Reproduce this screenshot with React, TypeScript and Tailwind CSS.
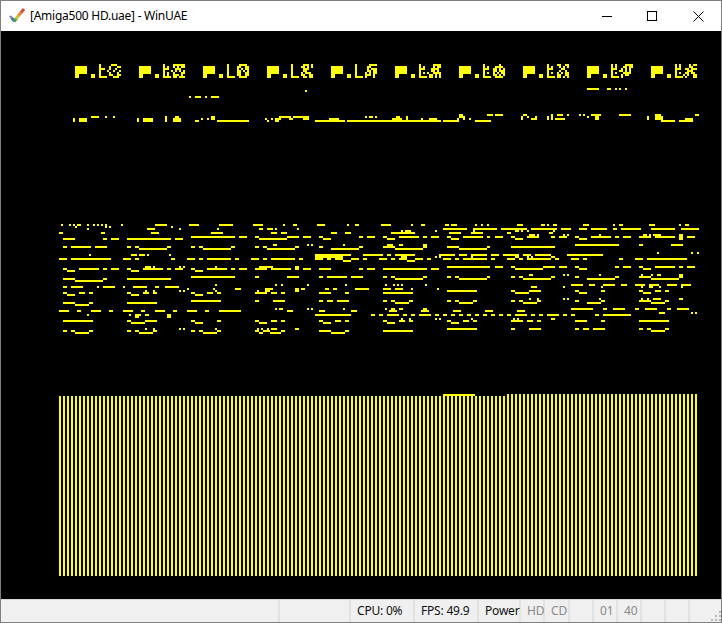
/**
 * WinUAE window with a garbled yellow Amiga display
 */

// Display rows measured from 3x crops: [y, x1, x2, x1, x2, ...], each row is 6 crop px tall
type Row = number[];

const LEFT: Row[] = [
  [27, 33, 39, 57, 63, 69, 75, 81, 93, 111, 117, 129, 135, 141, 147, 153, 159, 165, 171, 213, 219, 315, 351, 417, 447, 507, 549, 609, 639],
  [33, 75, 81, 165, 171, 177, 183, 363, 369],
  [39, 111, 117, 291, 315, 387, 393, 501, 507, 627, 639, 651, 660],
  [51, 27, 39, 153, 165, 303, 327, 483, 519],
  [63, 423, 555, 567, 591, 615, 627],
  [69, 39, 75, 159, 171, 183, 207, 231, 363, 375, 399, 627, 660],
  [93, 39, 51, 63, 123, 135, 171, 231, 243, 255, 267, 351, 363, 423, 435, 447, 459, 543, 555, 615, 627, 639, 651],
  [99, 267, 351, 459, 543, 651, 660],
  [117, 117, 123, 243, 261, 267, 285, 291, 297, 357, 363],
  [129, 27, 51, 63, 183, 219, 243, 255, 267, 363, 375, 411, 435, 447, 459, 471, 543, 555, 567, 603, 627, 639, 651],
  [153, 285, 303, 309, 315, 387, 393, 399, 405, 495, 501, 627, 660],
  [159, 39, 51, 87, 147, 159, 171, 183, 207, 231, 243, 279, 339, 351, 363, 375, 399, 423, 435, 471, 531, 543, 555, 567, 591, 615, 651],
  [165, 51, 75, 243, 267, 435, 459],
  [183, 423, 555, 615, 627],
  [189, 39, 75, 159, 171, 231, 363],
  [195, 75, 159],
  [207, 495, 501],
  [213, 39, 51, 63, 99, 141, 147, 159, 195, 219, 225, 249, 291, 315, 327, 345, 387],
  [219, 411, 417, 489, 495, 555, 573, 645, 660],
  [225, 285, 291, 309, 315, 387, 393, 399, 405, 495, 501, 621, 627, 645, 660],
  [231, 39, 51, 87, 105, 117, 129, 231, 243, 279, 297, 309, 321, 423, 435, 471, 489, 501, 513, 615, 651],
  [237, 51, 75, 243, 267, 435, 459],
  [255, 423, 513, 615, 627],
  [261, 39, 75, 117, 129, 231, 321],
  [267, 75, 117],
  [285, 27, 57, 81, 93, 123, 153, 177, 189, 219, 249, 273, 285, 315, 345, 369, 381, 411, 441, 465, 477, 507, 573],
  [297, 111, 117, 237, 243, 255, 273, 285, 297, 351, 363],
  [303, 255, 267, 351, 363],
  [315, 39, 129, 231, 243, 285, 321, 423, 435, 501, 513, 615, 627],
  [321, 243, 285, 435, 459, 627, 651],
  [339, 285, 291, 309, 315, 387, 393, 399, 405, 495, 501, 621, 627, 633, 639, 651, 657],
  [345, 39, 51, 63, 75, 117, 129, 231, 243, 255, 267, 309, 321, 423, 435, 447, 459, 501, 513, 615, 627, 639, 660],
  [351, 75, 117, 267, 309, 459, 501, 627, 639],
];

const MIDDLE: Row[] = [
  [27, 39, 45, 69, 81, 141, 165, 231, 237, 255, 267, 333, 363, 423, 429, 453, 465, 525, 537, 543, 561, 615, 621, 633, 639, 651, 657],
  [39, 0, 9, 15, 21, 81, 87, 519, 591, 609, 660],
  [45, 393, 399, 405, 423, 495, 501, 609, 615],
  [51, 3, 21, 33, 51, 183, 201, 225, 243, 363, 435, 537, 573, 603, 639],
  [63, 51, 87, 99, 123, 147, 159, 267, 279, 291, 315, 339, 351, 387, 447, 459, 471, 483, 507, 531, 543, 579, 639, 651, 660],
  [69, 0, 51, 159, 183, 351, 375, 543, 567],
  [87, 9, 21, 111, 117, 123, 129, 219, 225, 351, 369, 387, 399, 459, 471],
  [93, 75, 87, 147, 159, 267, 279, 339, 375, 459, 471, 531, 567, 651, 660],
  [99, 0, 75, 183, 267, 375, 459, 567, 651],
  [117, 135, 243, 279, 339, 351, 363, 375, 435, 507, 555, 567, 591, 603, 651],
  [123, 135, 219, 393, 411, 495, 501, 507, 513, 603, 609],
  [129, 3, 75, 87, 99, 135, 159, 171, 183, 195, 219, 243, 267, 279, 291, 327, 351, 363, 375, 387, 411, 435, 459, 471, 483, 519, 543, 555, 567, 579, 651],
  [135, 219, 243, 411, 435],
  [153, 0, 9, 75, 87, 531, 660],
  [159, 3, 63, 75, 87, 99, 123, 147, 183, 267, 279, 291, 315, 339, 471, 483, 507],
  [183, 51, 87, 147, 159, 171, 231, 243, 279, 339, 351, 363, 375, 459, 471, 531, 543, 555, 567, 651, 660],
  [189, 375, 459, 567, 651],
  [207, 15, 21, 33, 39, 111, 117, 225, 231, 345, 351, 369, 375, 381, 387, 393, 399, 465, 471],
  [219, 0, 9, 75, 87, 93, 105, 165, 177, 189, 201, 255, 297, 339, 363, 375, 399, 423, 429, 501, 507],
  [225, 75, 87, 531, 621],
  [231, 3, 21, 33, 45, 147, 183, 225, 237, 339, 429],
  [255, 9, 45, 147, 159, 171, 189, 201, 237, 339, 351, 363, 375, 417, 429, 531, 543, 555, 567, 609, 621],
  [261, 375, 417, 567, 609],
  [279, 15, 21, 27, 39, 111, 117, 123, 129, 219, 225, 345, 351, 363, 375, 387, 399, 459, 471],
  [285, 51, 69, 147, 165, 243, 261, 357, 381, 453, 477, 549, 573, 645, 660],
  [297, 135, 243, 303, 315, 327, 339, 351, 387, 399, 411, 423, 435, 447, 483, 495, 507, 519, 531, 543, 555, 567, 579, 591, 603, 615, 627, 639, 651],
  [309, 393, 399, 417, 423, 495, 501, 507, 513, 603, 609],
  [315, 3, 21, 33, 45, 147, 159, 195, 213, 225, 237, 339, 351, 387, 405, 417, 429, 531, 543, 579, 597, 609, 621],
  [321, 159, 183, 351, 375, 543, 567],
  [339, 3, 21, 75, 87, 531, 621],
  [345, 33, 45, 147, 183, 225, 237, 339, 429],
  [351, 0, 33, 183, 225],
];

const RIGHT: Row[] = [
  [27, 81, 99, 153, 165, 171, 177, 189, 201, 279, 297, 369, 375, 387, 399, 477, 495, 567, 573, 585, 597],
  [39, 0, 21, 33, 111, 123, 201, 213, 243, 267, 291, 303, 351, 369, 381, 393, 453, 483, 555, 573, 627],
  [45, 75, 87, 93, 99, 111, 117, 189, 195],
  [51, 51, 63, 177, 189],
  [57, 117, 135, 141, 147, 219, 225, 231, 237, 327, 333, 459, 471, 477, 483, 489, 513, 567, 579],
  [63, 15, 39, 63, 75, 111, 147, 183, 195, 207, 231, 255, 267, 303, 363, 375, 387, 399, 423, 447, 483, 495, 555, 567, 579, 591, 615],
  [69, 75, 99, 267, 291, 567, 579],
  [87, 255, 387, 447, 459, 543, 579],
  [93, 63, 195],
  [111, 501, 507, 603, 609, 621, 627],
  [117, 3, 27, 39, 87, 99, 123, 135, 183, 231, 339],
  [123, 75, 87, 111, 117, 123, 129, 183, 195],
  [129, 3, 15, 51, 75, 87, 99, 111, 183, 195, 207, 243, 267, 279, 291, 387, 399, 435, 459, 471, 591],
  [153, 15, 39, 63, 75, 159, 195, 207, 231, 255, 267, 375, 387, 399, 423, 447, 459, 495, 555, 567, 579, 591, 615],
  [159, 75, 159, 267, 291, 459, 483],
  [177, 117, 129, 219, 225, 231, 237, 327, 333, 453, 459, 483, 489, 501, 513, 567, 579],
  [183, 63, 75, 87, 99, 183, 195, 255, 267, 375, 387, 447, 483, 567, 579],
  [189, 99, 183, 291, 375, 483, 567],
  [207, 243, 279, 297, 315, 339, 375, 393, 411, 435, 465, 477, 507, 531, 561, 573, 603],
  [213, 123, 141, 219, 225, 333, 339, 453, 459, 477, 489, 507, 513, 573, 579],
  [225, 63, 75, 117, 153, 255, 267, 333, 345, 447, 459, 495, 513, 525, 537],
  [231, 75, 117, 267, 291, 459, 483],
  [249, 117, 123, 141, 147, 219, 225, 231, 237, 327, 333, 453, 459, 471, 477, 489, 513, 567, 579],
  [255, 63, 75, 87, 99, 141, 153, 255, 267, 333, 345, 447, 483, 525, 537],
  [261, 99, 141, 291, 333, 483, 525],
  [279, 243, 309, 339, 351, 369, 405, 435, 447, 465, 501, 531, 543, 561, 597],
  [285, 0, 9, 81, 105],
  [291, 507, 525, 603, 609, 615, 621],
  [297, 3, 15, 27, 39, 51, 63, 75, 111, 123, 135, 147, 159, 171, 207, 219, 231, 243, 255, 315, 327, 339, 423],
  [309, 69, 75, 81, 87, 183, 195],
  [315, 63, 99, 111, 129, 141, 153, 255, 291, 333, 345, 447, 537],
  [339, 63, 75, 117, 153, 255, 267, 279, 297, 309, 345, 447, 459, 471, 483, 525, 537],
  [345, 483, 525],
];

const HEADER_LEFT: Row[] = [
  [168, 63, 87, 105, 111, 129, 135, 285, 291, 315, 327, 423, 435, 627, 663, 669, 717, 885, 891, 897, 909, 915, 921],
  [174, 9, 15, 27, 51, 201, 207, 219, 249, 285, 291, 309, 333, 393, 399, 411, 417, 423, 435, 585, 591, 603, 609, 615, 633, 657, 669, 699, 717, 777, 789, 789, 807],
  [180, 9, 15, 27, 51, 201, 207, 219, 249, 285, 291, 309, 333, 375, 387, 441, 537, 591, 597, 615, 627, 735, 825, 831, 960],
];

const HEADER_RIGHT: Row[] = [
  [162, 207, 219, 291, 309, 315, 339, 399, 411, 483, 489, 501, 519, 531, 537, 567, 573, 579, 585, 603, 633, 687, 723, 795, 813, 915, 927],
  [168, 18, 30, 48, 54, 207, 225, 393, 399, 411, 417, 435, 441, 471, 477, 483, 489, 591, 597, 615, 627, 771, 777, 795, 819],
  [174, 6, 36, 48, 54, 93, 99, 117, 141, 201, 207, 219, 225, 237, 243, 393, 399, 423, 441, 471, 477, 483, 489, 495, 525, 615, 627, 771, 777, 795, 819, 885, 909],
  [180, 0, 153, 159, 207, 255, 303, 813, 855, 867, 909],
];

// Glyph clusters of the ten title tiles, on a 2px grid
const TILE_GLYPHS = [
  ['1.....111..', '1....1...11', '111..1..1..', '1...1..1..1', '1....1...1.', '1....11..11', '1111...111.'],
  ['1....111111', '1.1..1.1.11', '111...111..', '1...1.1.1.1', '1.1..1...11', '1.1..111.1.', '1111.11.111'],
  ['1.....1111.', '1....11..11', '1....1.1.11', '1....11.1.1', '1....11..11', '1....11..11', '1111..1111.'],
  ['1.....111.1', '1....11.1.1', '1.....111..', '1.....11...', '1....1.111.', '1....11..11', '1111..11.11'],
  ['1......1111', '1.....11...', '1.....1.111', '1.....11.11', '1....1.1.11', '1....111.1.', '1111.1...1.'],
  ['1......1111', '1.1....1.11', '111...1111.', '1.....11.1.', '1.1.1..1111', '1....11.1.1', '1111.11.1.1'],
  ['1.......1..', '1.1...1111.', '111..11.1.1', '1....11.111', '1.1..1.1.11', '1....11.1.1', '1111..1111.'],
  ['1....11..11', '1.1...1.1.1', '111....11..', '1.....1..1.', '1.1..1.1.11', '1....11..11', '1111.11.1.1'],
  ['1.1....1111', '1.1...11.11', '111..1.1.1.', '1...11.1.1.', '1.1...1111.', '1....1.11..', '1111.1.....'],
  ['1.1....1.11', '1.1....11..', '111..11.111', '1.....111..', '1.1..11.11.', '1...1.1..11', '1111.1...11'],
];

const Rects = ({ rows, ox, oy }: { rows: Row[]; ox: number; oy: number }) => (
  <>
    {rows.flatMap(([y, ...xs]) =>
      xs.filter((_, i) => i % 2 === 0).map((x1, i) => (
        <rect
          key={`${y}-${x1}`}
          x={ox + x1 / 3}
          y={oy + y / 3}
          width={(xs[i * 2 + 1] - x1) / 3}
          height={2}
        />
      ))
    )}
  </>
);

const Tile = ({ x, glyph }: { x: number; glyph: string[] }) => (
  <>
    <rect x={x} y={66} width={12} height={8} />
    <rect x={x} y={74} width={4} height={4} />
    <rect x={x + 16} y={74} width={4} height={4} />
    {glyph.flatMap((line, r) =>
      line.split('').map((c, col) =>
        c === '1' ? <rect key={`${r}-${col}`} x={x + 24 + col * 2} y={64 + r * 2} width={2} height={2} /> : null
      )
    )}
  </>
);

const StatusCell = ({ w, label, tone }: { w: string; label?: string; tone?: string }) => (
  <div className={`${w} h-full shrink-0 border-r-2 border-[#e2e2e2] pl-[6px] flex items-center tracking-[-0.2px] ${tone || 'text-[#111]'}`}>
    {label}
  </div>
);

export default function App() {
  const stripes = Array.from({ length: 160 }, (_, k) => 59 + k * 4);

  return (
    <div
      className="w-[722px] h-[623px] flex flex-col bg-white border-l border-t border-r border-[#7f7f7f] overflow-hidden text-[12px]"
      style={{ fontFamily: '"Noto Sans", sans-serif' }}
    >
      {/* Title bar */}
      <div className="h-[30px] shrink-0 flex items-center bg-white">
        <svg width="18" height="16" viewBox="0 0 18 16" className="ml-[8px] shrink-0">
          <path d="M1 8l2.5 3" stroke="#7f86a6" strokeWidth="2.5" fill="none" />
          <path d="M3 10.5l2.5 2.5" stroke="#3c6fc0" strokeWidth="3" fill="none" />
          <path d="M5 13.5l2.5-3" stroke="#4aa34a" strokeWidth="3" fill="none" />
          <path d="M7 11l3-4" stroke="#c9c43c" strokeWidth="3" fill="none" />
          <path d="M9.5 7.5l3-3.5" stroke="#e88a3c" strokeWidth="3" fill="none" />
          <path d="M12 4.5l3-3.5" stroke="#d9483c" strokeWidth="3" fill="none" />
        </svg>
        <span className="ml-[3px] text-[12px] text-[#000] tracking-[-0.25px] whitespace-nowrap">[Amiga500 HD.uae] - WinUAE</span>
        <div className="ml-auto flex h-full">
          <div className="w-[46px] flex items-center justify-center pl-[2px]">
            <div className="w-[10px] h-px bg-black" />
          </div>
          <div className="w-[46px] flex items-center justify-center">
            <div className="w-[10px] h-[10px] border border-black" />
          </div>
          <div className="w-[46px] flex items-center justify-center">
            <svg width="11" height="11" viewBox="0 0 11 11" stroke="#000" strokeWidth="1" fill="none">
              <path d="M0.5 0.5L10.5 10.5M10.5 0.5L0.5 10.5" />
            </svg>
          </div>
        </div>
      </div>

      {/* Emulator display, drawn in page coordinates */}
      <div className="h-[568px] shrink-0 bg-black">
        <svg width="720" height="568" viewBox="1 31 720 568" fill="#ffff00" shapeRendering="crispEdges" className="block">
          {TILE_GLYPHS.map((glyph, i) => (
            <Tile key={i} x={75 + i * 64} glyph={glyph} />
          ))}
          <rect x={189} y={96} width={2} height={2} />
          <rect x={195} y={96} width={6} height={2} />
          <rect x={205} y={96} width={2} height={2} />
          <rect x={211} y={96} width={8} height={2} />
          <rect x={305} y={90} width={2} height={2} />
          <rect x={587} y={88} width={12} height={2} />
          <rect x={607} y={88} width={4} height={2} />
          <rect x={615} y={88} width={2} height={2} />
          <rect x={619} y={88} width={2} height={2} />
          <rect x={625} y={88} width={2} height={2} />
          <Rects rows={HEADER_LEFT} ox={70} oy={60} />
          <Rects rows={HEADER_RIGHT} ox={390} oy={60} />
          <Rects rows={LEFT} ox={50} oy={215} />
          <Rects rows={MIDDLE} ox={270} oy={215} />
          <Rects rows={RIGHT} ox={490} oy={215} />
          {stripes.map((x) => (
            <rect key={x} x={x} y={x >= 507 ? 394 : 396} width={2} height={x >= 507 ? 182 : 180} />
          ))}
          <rect x={443} y={394} width={32} height={2} />
        </svg>
      </div>

      {/* Status bar */}
      <div className="h-[24px] shrink-0 flex bg-[#f0f0f0] border-t border-[#d7d7d7] border-b border-b-[#7f7f7f]">
        <StatusCell w="w-[279px]" />
        <StatusCell w="w-[71px]" />
        <StatusCell w="w-[64px]" label="CPU: 0%" />
        <StatusCell w="w-[64px]" label="FPS: 49.9" />
        <StatusCell w="w-[42px]" label="Power" tone="text-[#111] pl-[5px]" />
        <StatusCell w="w-[24px]" label="HD" tone="text-[#8a8a8a] pl-[4px]" />
        <StatusCell w="w-[25px]" label="CD" tone="text-[#8a8a8a] pl-[4px]" />
        <StatusCell w="w-[24px]" />
        <StatusCell w="w-[24px]" label="01" tone="text-[#8a8a8a]" />
        <StatusCell w="w-[24px]" label="40" tone="text-[#8a8a8a]" />
        <StatusCell w="w-[24px]" />
        <StatusCell w="w-[24px]" />
        <div className="flex-1 flex items-end justify-end pb-[1px]">
          <svg width="10" height="10" viewBox="0 0 10 10" fill="#b9b9b9" shapeRendering="crispEdges">
            <rect x="8" y="0" width="2" height="2" />
            <rect x="4" y="4" width="2" height="2" />
            <rect x="8" y="4" width="2" height="2" />
            <rect x="0" y="8" width="2" height="2" />
            <rect x="4" y="8" width="2" height="2" />
            <rect x="8" y="8" width="2" height="2" />
          </svg>
        </div>
      </div>
    </div>
  );
}
